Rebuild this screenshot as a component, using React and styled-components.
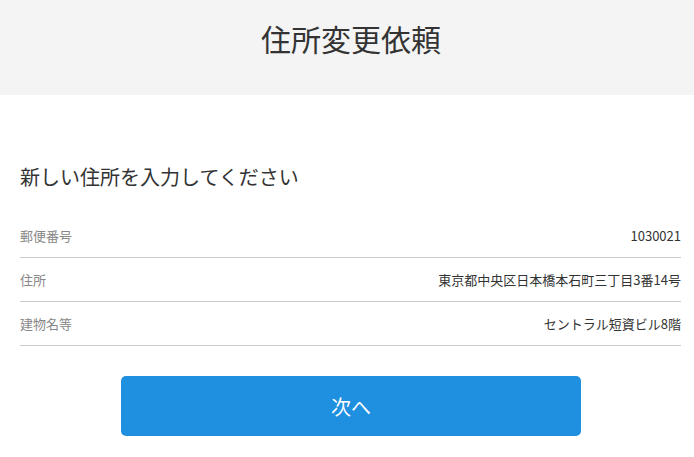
import React from "react";
import styled, { createGlobalStyle } from "styled-components";

const GlobalStyle = createGlobalStyle`
  html, body { margin: 0; padding: 0; background: #fff; overflow: hidden; }
  body {
    font-family: "Noto Sans CJK JP", "Noto Sans", sans-serif;
    color: #333;
  }
`;

const Page = styled.div`
  width: 702px;
  min-height: 457px;
  display: flex;
  flex-direction: column;
`;

const Header = styled.header`
  height: 95px;
  background: #f4f4f4;
  display: flex;
  justify-content: center;
  padding-top: 16px;
  box-sizing: border-box;
`;

const Title = styled.h1`
  margin: 0;
  font-size: 30px;
  font-weight: 400;
  line-height: 44px;
  color: #333;
`;

const Main = styled.main`
  padding: 62px 21px 0 20px;
`;

const Lead = styled.h2`
  margin: 0 0 17px;
  font-size: 20px;
  font-weight: 400;
  line-height: 40px;
  color: #333;
`;

const List = styled.dl`
  margin: 0;
`;

const Row = styled.div`
  display: flex;
  justify-content: space-between;
  align-items: center;
  height: 43px;
  border-bottom: 1px solid #cccccc;
`;

const Label = styled.dt`
  font-size: 13px;
  color: #888;
`;

const Value = styled.dd`
  margin: 0;
  font-size: 13px;
  color: #333;
`;

const Actions = styled.div`
  display: flex;
  justify-content: center;
  padding-top: 30px;
`;

const Button = styled.button`
  width: 460px;
  height: 60px;
  border: none;
  border-radius: 5px;
  background: #1f8fdf;
  color: #fff;
  font-family: inherit;
  font-size: 20px;
  cursor: pointer;
`;

const rows = [
  ["郵便番号", "1030021"],
  ["住所", "東京都中央区日本橋本石町三丁目3番14号"],
  ["建物名等", "セントラル短資ビル8階"],
];

export default function App() {
  return (
    <Page>
      <GlobalStyle />
      <Header>
        <Title>住所変更依頼</Title>
      </Header>
      <Main>
        <Lead>新しい住所を入力してください</Lead>
        <List>
          {rows.map(([k, v]) => (
            <Row key={k}>
              <Label>{k}</Label>
              <Value>{v}</Value>
            </Row>
          ))}
        </List>
      </Main>
      <Actions>
        <Button>次へ</Button>
      </Actions>
    </Page>
  );
}
